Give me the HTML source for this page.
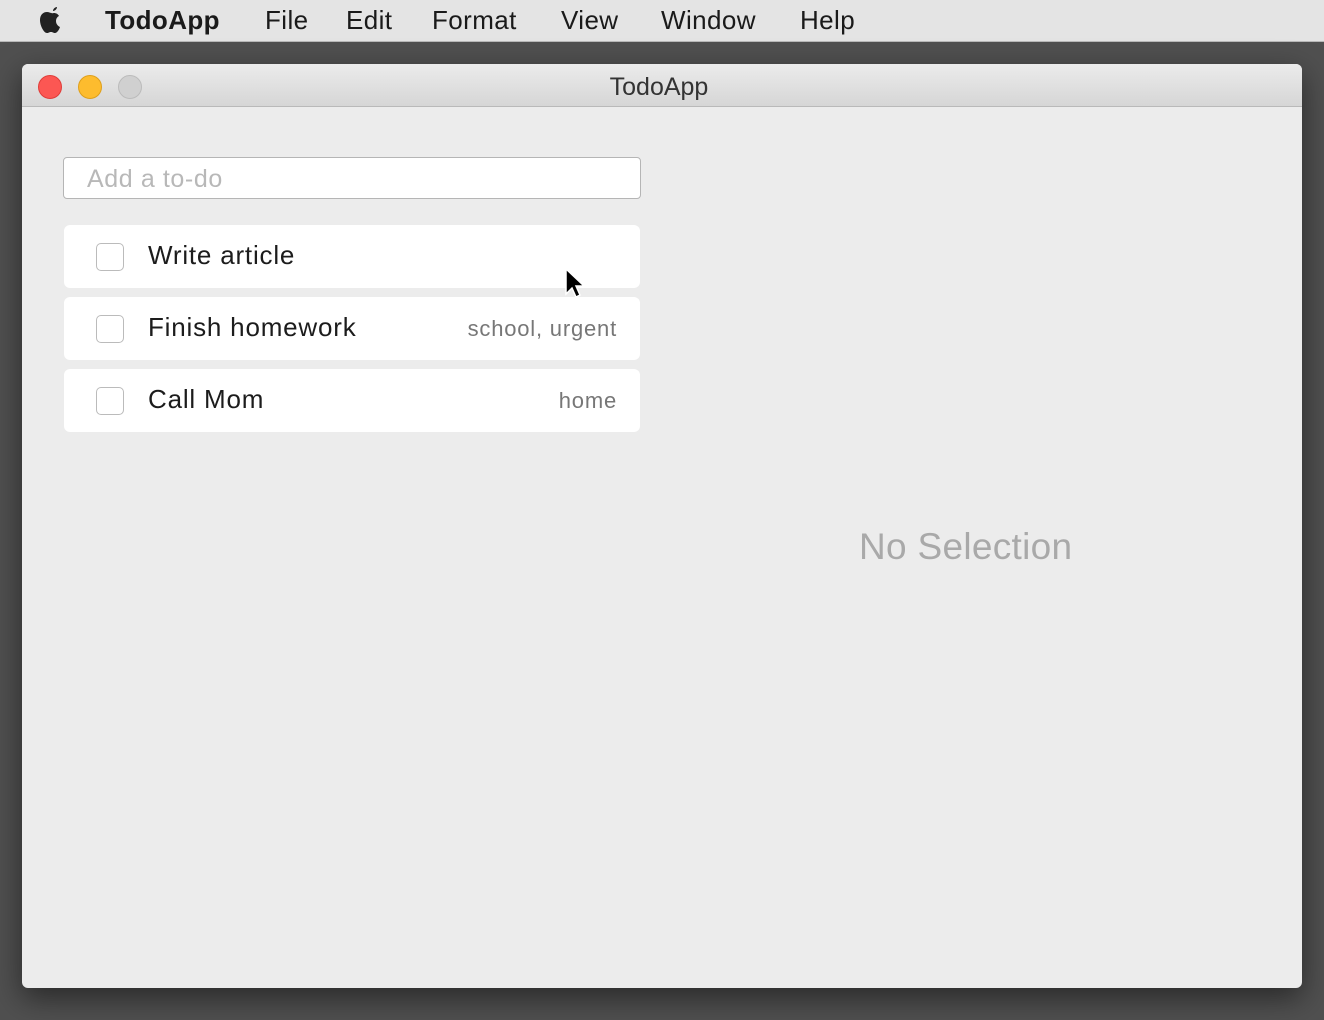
<!DOCTYPE html>
<html><head><style>
*{margin:0;padding:0;box-sizing:border-box}
body{width:1324px;height:1020px;background:#505050;font-family:"Liberation Sans",sans-serif;position:relative;overflow:hidden}
.menu{position:absolute;left:0;top:0;width:1324px;height:42px;background:#e4e4e4;border-bottom:1px solid #b8b8b8}
.menu span{position:absolute;top:5px;font-size:26px;color:#1a1a1a;letter-spacing:0.4px}
.win{position:absolute;left:22px;top:64px;width:1280px;height:924px;background:#ececec;border-radius:6px;overflow:hidden;box-shadow:0 10px 30px rgba(0,0,0,.5)}
.title{height:43px;background:linear-gradient(#ebebeb,#d6d6d6);border-bottom:1px solid #b9b9b9;text-align:center;font-size:25px;line-height:46px;color:#333;padding-right:6px}
.dot{position:absolute;top:11px;width:24px;height:24px;border-radius:50%}
.input{position:absolute;left:41px;top:93px;width:578px;height:42px;background:#fff;border:1px solid #b5b5b5;border-radius:4px;font-size:25px;color:#b8b8b8;padding:7px 0 0 23px;letter-spacing:0.6px}
.row{position:absolute;left:42px;width:576px;height:63px;background:#fff;border-radius:6px}
.cb{position:absolute;left:32px;top:18px;width:28px;height:28px;border:1px solid #bbb;border-radius:5px}
.t{position:absolute;left:84px;top:15px;font-size:26px;color:#1c1c1c;letter-spacing:0.8px}
.g{position:absolute;right:23px;top:19px;font-size:22px;color:#777;letter-spacing:0.8px}
</style></head><body>
<div class="menu">
<svg style="position:absolute;left:37px;top:4px" width="30" height="32" viewBox="0 0 30 32"><path d="M20 3c-2 0-4 2-4 4 2 0 4-2 4-4zM15 9c-2 0-3-1-5-1-4 0-7 3-7 8 0 6 4 13 7 13 2 0 2-1 4-1s2 1 4 1c2 0 4-3 5-6-2-1-4-3-4-6 0-2 1-4 3-5-1-2-3-3-5-3-2 0-3 1-2 0z" fill="#222"/></svg>
<span style="left:105px;font-weight:bold">TodoApp</span>
<span style="left:265px">File</span><span style="left:346px">Edit</span><span style="left:432px">Format</span><span style="left:561px">View</span><span style="left:661px">Window</span><span style="left:800px">Help</span>
</div>
<div class="win">
<div class="title">TodoApp</div>
<div class="dot" style="left:16px;background:#fc5753;border:1px solid #df3d39"></div>
<div class="dot" style="left:56px;background:#fdbc2e;border:1px solid #de9f1b"></div>
<div class="dot" style="left:96px;background:#d0d0d0;border:1px solid #bbb"></div>
<div class="input">Add a to-do</div>
<div class="row" style="top:161px"><div class="cb"></div><div class="t">Write article</div></div>
<div class="row" style="top:233px"><div class="cb"></div><div class="t">Finish homework</div><div class="g">school, urgent</div></div>
<div class="row" style="top:305px"><div class="cb"></div><div class="t">Call Mom</div><div class="g">home</div></div>
<div style="position:absolute;left:837px;top:462px;font-size:37px;color:#a9a9a9;letter-spacing:0.3px">No Selection</div>
<svg style="position:absolute;left:542px;top:203px" width="22" height="34" viewBox="0 0 22 34"><path d="M2 2v25l6-6 4 9 4-2-4-9h8z" fill="#000" stroke="#fff" stroke-width="1.5"/></svg>
</div>
</body></html>
